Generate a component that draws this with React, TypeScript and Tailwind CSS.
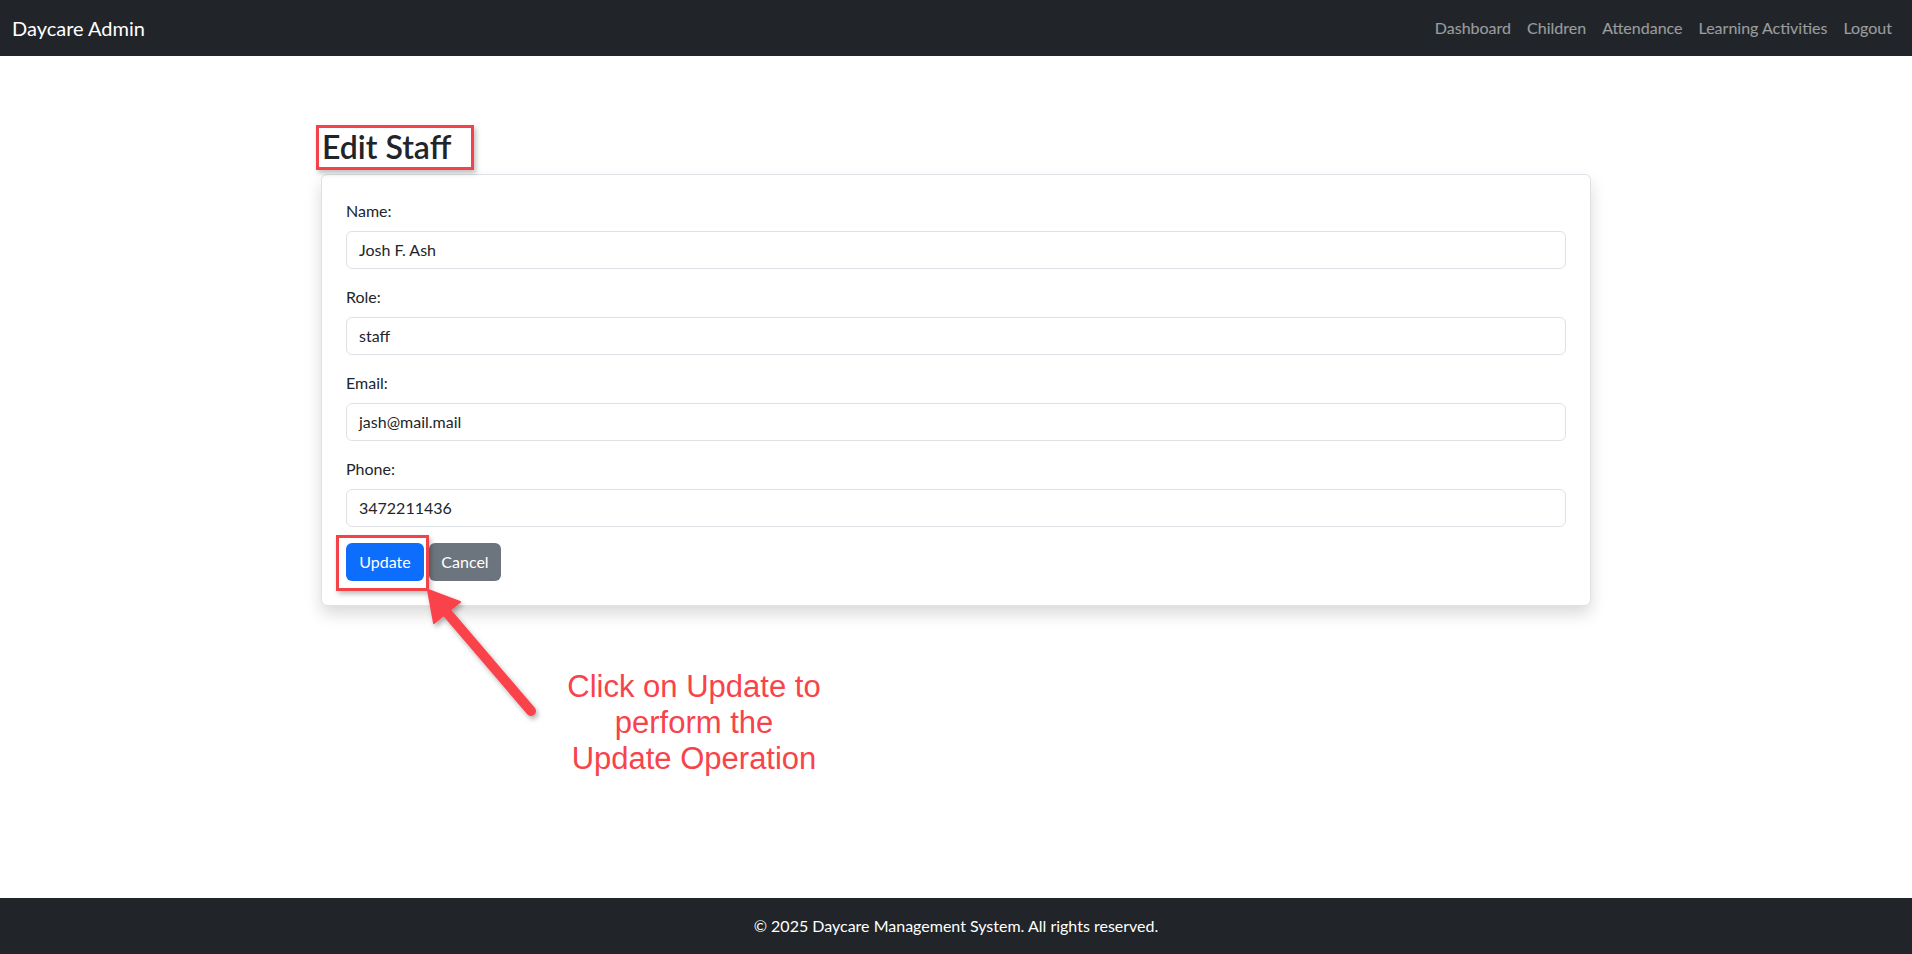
export default function App() {
  const fields = [
    { label: "Name:", value: "Josh F. Ash" },
    { label: "Role:", value: "staff" },
    { label: "Email:", value: "jash@mail.mail" },
    { label: "Phone:", value: "3472211436" },
  ];
  return (
    <div className="relative flex h-screen flex-col bg-white font-['Lato','Noto_Sans',sans-serif] text-[#212529]">
      <nav className="flex h-14 shrink-0 items-center justify-between bg-[#212529] px-3">
        <span className="text-[20px] text-white">Daycare Admin</span>
        <div className="flex text-[16px] text-white/55">
          <a className="px-2">Dashboard</a>
          <a className="px-2">Children</a>
          <a className="px-2">Attendance</a>
          <a className="px-2">Learning Activities</a>
          <a className="px-2">Logout</a>
        </div>
      </nav>

      <main className="flex-1 pt-[69px]">
        <div className="mx-auto w-[1270px]">
          <div className="ml-[-5px] inline-block h-[45px] border-[3px] border-[#f4424a] pl-[3px] pr-[20px] shadow-[2px_3px_5px_rgba(0,0,0,0.25)]">
            <h2 className="text-[32px] font-semibold leading-[38px]">Edit Staff</h2>
          </div>
          <div className="mt-[4px] rounded-md border border-[#dee2e6] bg-white p-6 shadow-[0_8px_16px_rgba(0,0,0,0.15)]">
            {fields.map((f) => (
              <div key={f.label} className="mb-4">
                <label className="mb-2 block text-[16px] leading-6">{f.label}</label>
                <div className="flex h-[38px] items-center rounded-md border border-[#dee2e6] px-3 text-[16px]">
                  {f.value}
                </div>
              </div>
            ))}
            <div className="flex gap-[5px]">
              <div className="relative">
                <button className="h-[38px] w-[78px] rounded-md bg-[#0d6efd] text-[16px] text-white">Update</button>
                <div className="absolute left-[-10px] top-[-8px] h-[56px] w-[93px] border-[3px] border-[#f4424a] shadow-[2px_3px_5px_rgba(0,0,0,0.25)]"></div>
              </div>
              <button className="h-[38px] w-[72px] rounded-md bg-[#6c757d] text-[16px] text-white">Cancel</button>
            </div>
          </div>
        </div>
      </main>

      <footer className="flex h-14 shrink-0 items-center justify-center bg-[#212529] text-[16px] text-white">
        © 2025 Daycare Management System. All rights reserved.
      </footer>

      <svg className="pointer-events-none absolute left-0 top-0" width="1912" height="954">
        <defs>
          <filter id="sh" x="-20%" y="-20%" width="140%" height="140%">
            <feDropShadow dx="2" dy="3" stdDeviation="2.5" floodColor="#000" floodOpacity="0.3" />
          </filter>
        </defs>
        <g filter="url(#sh)" fill="#f9434a" stroke="#f9434a">
          <line x1="531" y1="711" x2="443" y2="608" strokeWidth="10" strokeLinecap="round" />
          <polygon points="428,590 434,623 460,602" strokeWidth="2" strokeLinejoin="round" />
        </g>
      </svg>

      <div className="absolute left-[494px] top-[669px] w-[400px] text-center font-['Liberation_Sans',Arial,sans-serif] text-[31px] leading-[36px] text-[#f9434a]">
        Click on Update to
        <br />
        perform the
        <br />
        Update Operation
      </div>
    </div>
  );
}
